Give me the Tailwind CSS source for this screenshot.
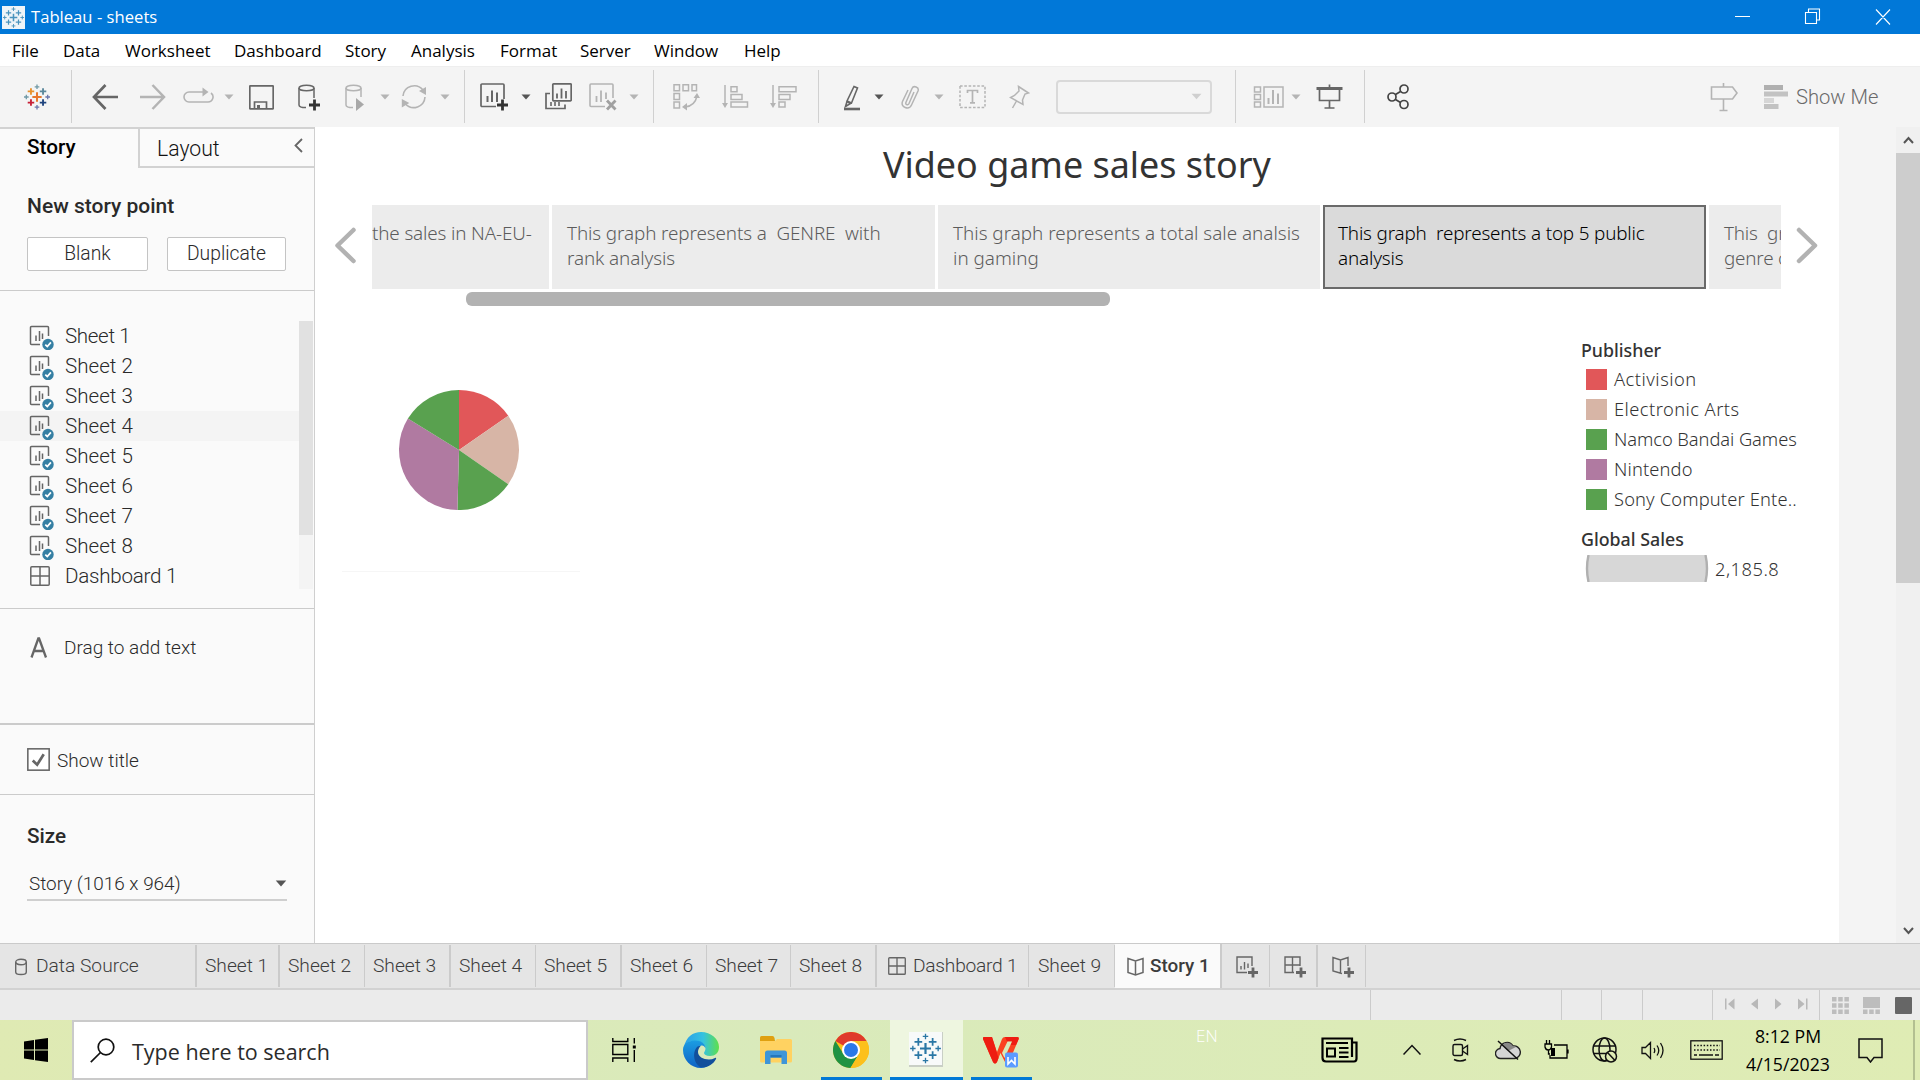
<!DOCTYPE html>
<html lang="en">
<head>
<meta charset="utf-8">
<title>Tableau - sheets</title>
<script src="https://cdn.jsdelivr.net/npm/@tailwindcss/browser@4"></script>
</head>
<body class="w-[1920px] h-[1080px] overflow-hidden bg-white flex flex-col font-['Open_Sans',sans-serif]">

<svg class="hidden">
  <symbol id="caret" viewBox="0 0 10 6"><path d="M.5 .5h9L5 5.5z" fill="currentColor"/></symbol>
  <symbol id="sheet" viewBox="0 0 25 25"><path d="M11 19.500H2.500a1 1 0 0 1-1-1V2.500a1 1 0 0 1 1-1H18.500a1 1 0 0 1 1 1V11" fill="none" stroke="#666" stroke-width="1.500"/><path d="M7 10.500v5.500M10.500 6v10M13.500 8.500V14" stroke="#666" stroke-width="1.500"/><circle cx="19" cy="19.500" r="5.700" fill="#357fa3"/><path d="M16.300 19.600l2 2 3.600-4.200" fill="none" stroke="#fff" stroke-width="1.700"/></symbol>
  <symbol id="board" viewBox="0 0 20 20"><rect x=".8" y=".8" width="18.400" height="18.400" rx="1" fill="none" stroke="#666" stroke-width="1.500"/><path d="M10 1v18M1 10h18" stroke="#666" stroke-width="1.500"/></symbol>
  <symbol id="marks" viewBox="0 0 28 28"><path d="M14 9v10M9 14h10" stroke-width="2"/><path d="M7.500 4.500v7M4 8h7M20.500 4.500v7M17 8h7M7.500 16.500v7M4 20h7M20.500 16.500v7M17 20h7" stroke-width="1.600"/><path d="M14 .5v5M11.500 3h5M14 22.500v5M11.500 25h5M2.500 11.500v5M0 14h5M25.500 11.500v5M23 14h5" stroke-width="1.200"/></symbol>
</svg>

<!-- Title bar -->
<header class="h-[34px] shrink-0 bg-[#0178d8] text-white flex items-center text-[16.6px]">
  <svg class="ml-[2px] w-[23px] h-[23px] bg-[#eef4f8]" viewBox="-1 -1 30 30"><use href="#marks" width="28" height="28" stroke="#4a93bd"/></svg>
  <span class="ml-[6px] pt-px tracking-[0.02px]">Tableau - sheets</span>
  <svg class="ml-auto mr-[28px] w-[158px] h-[18px]" viewBox="0 0 158 18" fill="none" stroke="#fff" stroke-width="1.100"><path d="M1 8.500h15M71.500 4.500h11v11h-11zM74.500 4v-3h11v11h-3M142 1.500l14 15M156 1.500l-14 15"/></svg>
</header>

<!-- Menu bar -->
<nav class="h-[32px] shrink-0 bg-white text-black text-[17px] flex items-center pt-px pl-[12px] gap-[25px]">
  <span class="w-[26px]">File</span><span class="w-[37px]">Data</span><span class="w-[84px]">Worksheet</span><span class="w-[86px]">Dashboard</span><span class="w-[41px]">Story</span><span class="w-[64px]">Analysis</span><span class="w-[55px]">Format</span><span class="w-[49px]">Server</span><span class="w-[65px]">Window</span><span>Help</span>
</nav>

<!-- Toolbar -->
<div class="h-[61px] shrink-0 bg-[#f4f4f4] border-t border-[#eeeeee] flex items-center pb-px text-[#b4b4b4]">
  <svg class="ml-[24px] w-[26px] h-[26px] shrink-0" viewBox="0 0 28 28"><path d="M14 9v10M9 14h10" stroke="#e8762c" stroke-width="2.200"/><path d="M7.500 4.500v7M4 8h7" stroke="#e8912c" stroke-width="2"/><path d="M20.500 4.500v7M17 8h7" stroke="#5b879b" stroke-width="2"/><path d="M7.500 16.500v7M4 20h7" stroke="#c72037" stroke-width="2"/><path d="M20.500 16.500v7M17 20h7" stroke="#1f447e" stroke-width="2"/><path d="M14 .5v5M11.500 3h5M2.500 11.500v5M0 14h5" stroke="#7099a6" stroke-width="1.400"/><path d="M14 22.500v5M11.500 25h5M25.500 11.500v5M23 14h5" stroke="#6a76ac" stroke-width="1.400"/></svg>
  <i class="ml-[21px] w-px h-[53px] bg-[#d0d0d0]"></i>
  <svg class="ml-[20px] w-[27px] h-[29px] shrink-0" viewBox="0 0 27 29" fill="none" stroke="#666" stroke-width="2.700"><path d="M26 15H2M13.500 3L2 15l11.500 12"/></svg>
  <svg class="ml-[21px] w-[27px] h-[29px] shrink-0" viewBox="0 0 27 29" fill="none" stroke="#b4b4b4" stroke-width="2.500"><path d="M0 15h24M12.500 3L24 15 12.500 27"/></svg>
  <svg class="ml-[16px] w-[31px] h-[29px] shrink-0" viewBox="0 0 31 29" fill="none" stroke="#b4b4b4" stroke-width="1.600"><path d="M22 10H6a5 5 0 0 0 0 10h19a5 5 0 0 0 3-9"/><path d="M19.500 5.500l6 4.500-6 4.500z" fill="#b4b4b4" stroke="none"/></svg>
  <svg class="ml-[10px] w-[10px] h-[6px] shrink-0"><use href="#caret"/></svg>
  <svg class="ml-[15px] w-[25px] h-[29px] shrink-0" viewBox="0 0 25 29" fill="none" stroke="#666" stroke-width="1.700"><rect x=".8" y="3.800" width="23.400" height="23" rx=".5"/><path d="M5.500 27v-7h12v7" /><path d="M9.500 23v4" stroke-width="3"/></svg>
  <svg class="ml-[24px] w-[23px] h-[29px] shrink-0" viewBox="0 0 23 29" fill="none" stroke="#666" stroke-width="1.500"><ellipse cx="8.500" cy="6" rx="7.500" ry="2.800"/><path d="M1 6v17c0 1.500 3 2.600 7 2.600M16 6v10"/><path d="M16.500 17.500v11M11 23h11" stroke="#333" stroke-width="2.800"/></svg>
  <svg class="ml-[24px] w-[20px] h-[29px] shrink-0" viewBox="0 0 20 29" fill="none" stroke="#b4b4b4" stroke-width="1.500"><ellipse cx="8.500" cy="6" rx="7.500" ry="2.800"/><path d="M1 6v17c0 1.500 3 2.600 7 2.600M16 6v9"/><path d="M11 16l8 6.500-8 6.500z" fill="#a8a8a8" stroke="none"/></svg>
  <svg class="ml-[15px] w-[10px] h-[6px] shrink-0"><use href="#caret"/></svg>
  <svg class="ml-[11px] w-[27px] h-[29px] shrink-0" viewBox="0 0 27 29" fill="none" stroke="#b4b4b4" stroke-width="1.600"><path d="M2 14A11.300 11.300 0 0 1 22 8M24 15A11.300 11.300 0 0 1 4.500 22"/><path d="M25 5v8l-7-4zM.8 25.500V17l7.500 4z" fill="#b4b4b4" stroke="none"/></svg>
  <svg class="ml-[12px] w-[10px] h-[6px] shrink-0"><use href="#caret"/></svg>
  <i class="ml-[14px] w-px h-[53px] bg-[#d0d0d0]"></i>
  <svg class="ml-[15px] w-[30px] h-[29px] shrink-0" viewBox="0 0 30 29" fill="none" stroke="#666" stroke-width="1.700"><path d="M16 24.500H2a1 1 0 0 1-1-1V3a1 1 0 0 1 1-1h21a1 1 0 0 1 1 1v14"/><path d="M7.500 14v6M12 8.500V20M17 10.500V20" stroke-width="2"/><path d="M22.500 17.500v11M17 23h11" stroke="#333" stroke-width="2.800"/></svg>
  <svg class="ml-[11px] w-[10px] h-[6px] shrink-0 text-[#555]"><use href="#caret"/></svg>
  <svg class="ml-[14px] w-[27px] h-[29px] shrink-0" viewBox="0 0 27 29" fill="none" stroke="#666" stroke-width="1.700"><rect x="7.800" y="1.800" width="18.400" height="17" rx=".8"/><path d="M12 11.500v5M16.500 6.500v10M21 9v7.500" stroke-width="1.800"/><path d="M5 11.500H1v15h19v-4"/><path d="M6 20v4M10 20v4M14 20v4" stroke-width="1.600"/></svg>
  <svg class="ml-[17px] w-[29px] h-[29px] shrink-0" viewBox="0 0 29 29" fill="none" stroke="#b4b4b4" stroke-width="1.600"><path d="M16 24.500H2a1 1 0 0 1-1-1V3a1 1 0 0 1 1-1h21a1 1 0 0 1 1 1v13"/><path d="M7.500 14v6M12 8.500V20M17 10.500V17" stroke-width="1.800"/><path d="M18 18.500l8.500 9M26.500 18.500l-8.500 9" stroke="#a0a0a0" stroke-width="2.800"/></svg>
  <svg class="ml-[11px] w-[10px] h-[6px] shrink-0"><use href="#caret"/></svg>
  <i class="ml-[14px] w-px h-[53px] bg-[#d0d0d0]"></i>
  <svg class="ml-[19px] w-[27px] h-[29px] shrink-0" viewBox="0 0 27 29" fill="none" stroke="#b4b4b4" stroke-width="1.500"><path d="M1 2.800h5.500v6H1zM10 2.800h5.500v6H10zM19 2.800h4.500v6H19zM1 11.500h5.500v6H1zM1 20h5.500v6H1zM12 25q10-1 12-11"/><path d="M20.500 16l3.500-5 3 5zM14 21l-5 4 5 3.500z" fill="#b4b4b4" stroke="none"/></svg>
  <svg class="ml-[22px] w-[27px] h-[29px] shrink-0" viewBox="0 0 27 29" fill="none" stroke="#b4b4b4" stroke-width="1.500"><path d="M3 3v21M9 4.800h6v5H9zM9 12.500h11v5H9zM9 20h16.500v5H9z"/><path d="M0 21h6l-3 5z" fill="#b4b4b4" stroke="none"/></svg>
  <svg class="ml-[21px] w-[27px] h-[29px] shrink-0" viewBox="0 0 27 29" fill="none" stroke="#b4b4b4" stroke-width="1.500"><path d="M3 3v21M9 4.800h17v5H9zM9 12.500h11v5H9zM9 20h6v5H9z"/><path d="M0 21h6l-3 5z" fill="#b4b4b4" stroke="none"/></svg>
  <i class="ml-[21px] w-px h-[53px] bg-[#d0d0d0]"></i>
  <svg class="ml-[24px] w-[18px] h-[29px] shrink-0" viewBox="0 0 18 29" fill="none" stroke="#666" stroke-width="1.600"><path d="M11 4.500l3.500 1.500-6 15-4.500-2zM4 19.500l3.500 2-5 3z"/><path d="M1 27h16" stroke-width="2.600"/></svg>
  <svg class="ml-[13px] w-[10px] h-[6px] shrink-0 text-[#555]"><use href="#caret"/></svg>
  <svg class="ml-[16px] w-[20px] h-[29px] shrink-0" viewBox="0 0 20 29" fill="none" stroke="#b4b4b4" stroke-width="1.500"><path d="M14 10L9 21.500c-1.200 2.500-4 1-3-1.300L12 6.500c1.500-3.500 7.500-1.500 6 2.500L11.500 23C9 28.500 .2 25.500 2.500 19.500L8 8"/></svg>
  <svg class="ml-[14px] w-[10px] h-[6px] shrink-0"><use href="#caret"/></svg>
  <svg class="ml-[15px] w-[27px] h-[29px] shrink-0" viewBox="0 0 27 29" fill="none" stroke="#b4b4b4" stroke-width="1.500"><rect x="1" y="4" width="25" height="21.500" stroke-dasharray="2.600 1.700"/><path d="M8.500 11V8.500h10V11M13.500 8.500v12M11 20.800h5" stroke-width="1.700"/></svg>
  <svg class="ml-[23px] w-[21px] h-[29px] shrink-0" viewBox="0 0 21 29" fill="none" stroke="#b4b4b4" stroke-width="1.500"><path d="M9.500 4.500l10 6.500-3.500 1-2.500 6 .5 4.500L1.500 15.500l4-2 4.500-4.500zM7.500 19L3.500 26"/></svg>
  <span class="ml-[26px] w-[156px] h-[34px] border-2 border-[#d9d9d9] rounded-sm flex items-center justify-end pr-[8px] text-[#cfcfcf]"><svg class="w-[11px] h-[7px]"><use href="#caret"/></svg></span>
  <i class="ml-[23px] w-px h-[53px] bg-[#d0d0d0]"></i>
  <svg class="ml-[17px] w-[31px] h-[29px] shrink-0" viewBox="0 0 31 29" fill="none" stroke="#b4b4b4" stroke-width="1.500"><path d="M1.500 5h6v5h-6zM1.500 12.500h6v5h-6zM1.500 20h6v5h-6zM11 5h19v20H11z"/><path d="M15.500 16v6M20 8v14M25 11.500V22" stroke-width="2"/></svg>
  <svg class="ml-[7px] w-[10px] h-[6px] shrink-0"><use href="#caret"/></svg>
  <svg class="ml-[15px] w-[27px] h-[29px] shrink-0" viewBox="0 0 27 29" fill="none" stroke="#666" stroke-width="1.700"><path d="M3.500 6v12.500h20V6M13.500 2.500V6M13.500 18.500V26M8.500 26h10"/><path d="M.5 6.500h26" stroke-width="3"/></svg>
  <i class="ml-[21px] w-px h-[53px] bg-[#d0d0d0]"></i>
  <svg class="ml-[22px] w-[22px] h-[29px] shrink-0" viewBox="0 0 22 29" fill="none" stroke="#444" stroke-width="1.700"><circle cx="5" cy="15" r="4"/><circle cx="17" cy="7" r="4"/><circle cx="17" cy="22.500" r="4"/><path d="M8.500 12.500l5-3M8.500 17.500l5 3"/></svg>
  <svg class="ml-[301px] w-[28px] h-[32px] shrink-0" viewBox="0 0 28 32" fill="none" stroke="#b4b4b4" stroke-width="1.600"><path d="M1.500 6h21l4.500 6-4.500 6h-21zM13.500 2v4M13.500 18v11.500M9.500 29.500h8"/></svg>
  <svg class="ml-[26px] w-[24px] h-[29px] shrink-0" viewBox="0 0 24 29"><path d="M0 3h19v5H0z" fill="#b0b0b0"/><path d="M0 9.500h24v5H0zM0 22h14.500v5H0z" fill="#c2c2c2"/><path d="M0 16h10v5H0z" fill="#d6d6d6"/></svg>
  <span class="ml-[8px] pt-px text-[20.200px] font-light text-[#6a6a6a] font-['Roboto',sans-serif] whitespace-nowrap">Show Me</span>
</div>

<div class="h-[816px] shrink-0 flex">
  <!-- Story side pane -->
  <aside class="w-[315px] shrink-0 bg-[#fafafa] border-r border-[#cfcfcf] flex flex-col font-['Roboto',sans-serif] text-[#2a2a2a] font-light">
    <div class="h-[41px] shrink-0 flex border-t-2 border-[#d2d2d2]">
      <div class="w-[138px] pl-[27px] leading-[37px] text-[20.700px] font-medium text-black">Story</div>
      <div class="grow border-l-2 border-b-2 border-[#d2d2d2] pl-[17px] pr-[11px] flex items-start justify-between text-[21.200px] leading-[39px] text-[#111]">Layout
        <svg class="mt-[9px] w-[9px] h-[15px]" viewBox="0 0 9 15" fill="none" stroke="#666" stroke-width="1.800"><path d="M8 1L1.500 7.500 8 14"/></svg>
      </div>
    </div>
    <div class="h-[123px] shrink-0 border-b border-[#cbcbcb] pl-[27px] pt-[24px]">
      <h2 class="text-[21px] leading-[28px] font-medium">New story point</h2>
      <div class="flex mt-[17px] gap-[19px] text-[19.300px] leading-[31px] text-center">
        <div class="w-[121px] h-[34px] bg-white border border-[#c4c4c4] rounded-[2px]">Blank</div>
        <div class="w-[119px] h-[34px] bg-white border border-[#c4c4c4] rounded-[2px]">Duplicate</div>
      </div>
    </div>
    <div class="h-[318px] shrink-0 border-b border-[#cbcbcb] pt-[30px] flex">
      <ul class="w-[299px] text-[20.600px] leading-[30px]">
        <li class="flex h-[30px] pl-[29px] gap-[11px] tracking-[-0.35px]"><svg class="mt-[4px] w-[25px] h-[25px]"><use href="#sheet"/></svg>Sheet 1</li>
        <li class="flex h-[30px] pl-[29px] gap-[11px]"><svg class="mt-[4px] w-[25px] h-[25px]"><use href="#sheet"/></svg>Sheet 2</li>
        <li class="flex h-[30px] pl-[29px] gap-[11px]"><svg class="mt-[4px] w-[25px] h-[25px]"><use href="#sheet"/></svg>Sheet 3</li>
        <li class="flex h-[30px] pl-[29px] gap-[11px] bg-[#f4f4f4]"><svg class="mt-[4px] w-[25px] h-[25px]"><use href="#sheet"/></svg>Sheet 4</li>
        <li class="flex h-[30px] pl-[29px] gap-[11px]"><svg class="mt-[4px] w-[25px] h-[25px]"><use href="#sheet"/></svg>Sheet 5</li>
        <li class="flex h-[30px] pl-[29px] gap-[11px]"><svg class="mt-[4px] w-[25px] h-[25px]"><use href="#sheet"/></svg>Sheet 6</li>
        <li class="flex h-[30px] pl-[29px] gap-[11px]"><svg class="mt-[4px] w-[25px] h-[25px]"><use href="#sheet"/></svg>Sheet 7</li>
        <li class="flex h-[30px] pl-[29px] gap-[11px]"><svg class="mt-[4px] w-[25px] h-[25px]"><use href="#sheet"/></svg>Sheet 8</li>
        <li class="flex h-[30px] pl-[29px] gap-[15px] tracking-[-0.25px]"><svg class="mt-[5px] ml-px w-[20px] h-[20px]"><use href="#board"/></svg>Dashboard 1</li>
      </ul>
      <div class="w-[14px] h-[268px] bg-[#f4f4f4]"><div class="h-[214px] bg-[#e1e1e1]"></div></div>
    </div>
    <div class="h-[116px] shrink-0 border-b-2 border-[#cbcbcb] pl-[30px] pt-[24px] flex gap-[16px] text-[19px] leading-[30px]">
      <svg class="mt-[4px] w-[18px] h-[21px]" viewBox="0 0 18 21" fill="none" stroke="#666" stroke-width="2.300"><path d="M1.500 20.500L8.300 1.500h.8L16 20.500M4 14h9.500"/></svg>
      <span>Drag to add text</span>
    </div>
    <div class="h-[70px] shrink-0 border-b border-[#cbcbcb] pl-[27px] flex items-center gap-[8px] text-[19px]">
      <svg class="w-[23px] h-[23px] mb-px" viewBox="0 0 22 22" fill="#fff" stroke="#666"><rect x=".8" y=".8" width="20.400" height="20.400" stroke-width="1.500"/><path d="M5.500 12l4.200 4L16 6" fill="none" stroke-width="2.600"/></svg>
      <span class="pt-[4px] -ml-px">Show title</span>
    </div>
    <div class="pl-[27px] pt-[27px]">
      <h2 class="text-[20.700px] leading-[28px] font-medium">Size</h2>
      <div class="mt-[20px] w-[260px] h-[31px] border-b-2 border-[#cfcfcf] flex items-center justify-between pb-[2px] pl-[2px] text-[18.900px] leading-[27px]">Story (1016 x 964)
        <svg class="w-[12px] h-[7px] text-[#555]"><use href="#caret"/></svg>
      </div>
    </div>
  </aside>

  <!-- Story canvas -->
  <main class="w-[1524px] shrink-0 bg-white font-['Noto_Sans',sans-serif] text-[#333]">
    <h1 class="ml-[568px] pt-[13px] h-[78px] text-[35.900px] leading-[50px] whitespace-nowrap">Video game sales story</h1>
    <div class="flex h-[84px]">
      <svg class="ml-[18px] mt-[21px] w-[24px] h-[40px]" viewBox="0 0 24 40" fill="none" stroke="#b2b2b2" stroke-width="4.500" stroke-linecap="round" stroke-linejoin="round"><path d="M20.500 4L4.500 19.500 20.500 35"/></svg>
      <div class="ml-[15px] w-[1409px] flex gap-[3px] overflow-hidden text-[18.850px] leading-[25px] font-light text-[#5c5c5c] whitespace-pre">
        <div class="w-[177px] shrink-0 bg-[#ececec] pt-[16px] tracking-[-0.14px]">the sales in NA-EU-</div>
        <div class="w-[383px] shrink-0 bg-[#ececec] pt-[16px] pl-[15px] tracking-[-0.1px]">This graph represents a  GENRE  with
rank analysis</div>
        <div class="w-[382px] shrink-0 bg-[#ececec] pt-[16px] pl-[15px]">This graph represents a total sale analsis
in gaming</div>
        <div class="w-[383px] shrink-0 bg-[#dadada] border-2 border-[#6a6a6a] pt-[14px] pl-[13px] text-black tracking-[-0.17px]">This graph  represents a top 5 public
analysis</div>
        <div class="w-[383px] shrink-0 bg-[#ececec] pt-[16px] pl-[15px] tracking-[-0.2px]">This  graph
genre of</div>
      </div>
      <svg class="ml-[14px] mt-[21px] w-[24px] h-[40px]" viewBox="0 0 24 40" fill="none" stroke="#b2b2b2" stroke-width="4.500" stroke-linecap="round" stroke-linejoin="round"><path d="M4 4l16 15.500L4 35"/></svg>
    </div>
    <div class="mt-[3px] ml-[151px] w-[644px] h-[14px] rounded-[6px] bg-[#b2b2b2]"></div>
    <div class="flex justify-between">
      <div class="ml-[27px] w-[238px] h-[266px] border-b border-[#f6f6f6] pt-[84px] pl-[57px]">
        <svg class="w-[120px] h-[120px]" viewBox="-60 -60 120 120">
          <path d="M0 0V-60A60 60 0 0 1 49.300-34.200z" fill="#e15759"/>
          <path d="M0 0L49.300-34.200A60 60 0 0 1 49.300 34.200z" fill="#d7b5a6"/>
          <path d="M0 0L49.300 34.200A60 60 0 0 1-1.600 60z" fill="#59a14f"/>
          <path d="M0 0L-1.600 60A60 60 0 0 1-51.100-31.400z" fill="#b07aa1"/>
          <path d="M0 0L-51.100-31.400A60 60 0 0 1 0-60z" fill="#59a14f"/>
        </svg>
      </div>
      <div class="w-[258px] pt-[30px] text-[18.300px] font-light leading-[30px]">
        <h3 class="text-[17.800px] font-medium leading-[28px]">Publisher</h3>
        <ul class="pl-[5px]">
          <li class="flex items-center gap-[7px] h-[30px] tracking-[0.5px]"><i class="w-[21px] h-[21px] bg-[#e15759]"></i>Activision</li>
          <li class="flex items-center gap-[7px] h-[30px] tracking-[0.45px]"><i class="w-[21px] h-[21px] bg-[#d7b5a6]"></i>Electronic Arts</li>
          <li class="flex items-center gap-[7px] h-[30px] tracking-[-0.06px]"><i class="w-[21px] h-[21px] bg-[#59a14f]"></i>Namco Bandai Games</li>
          <li class="flex items-center gap-[7px] h-[30px] tracking-[0.15px]"><i class="w-[21px] h-[21px] bg-[#b07aa1]"></i>Nintendo</li>
          <li class="flex items-center gap-[7px] h-[30px] tracking-[0.15px]"><i class="w-[21px] h-[21px] bg-[#59a14f]"></i>Sony Computer Ente..</li>
        </ul>
        <h3 class="mt-[11px] text-[17.800px] font-medium leading-[28px]">Global Sales</h3>
        <div class="flex items-center pl-[4px] gap-[6px]">
          <svg class="w-[124px] h-[27px]" viewBox="0 0 124 27"><path d="M3 0h118q2 13.500 0 27H3q-2-13.500 0-27z" fill="#d7d7d7"/><path d="M3.500 0Q.5 13.500 3.500 27M120.500 0q3 13.500 0 27" fill="none" stroke="#b0b0b0" stroke-width="2.400"/></svg>
          <span class="tracking-[0.5px] pt-px">2,185.8</span>
        </div>
      </div>
    </div>
  </main>
  <div class="w-[57px] bg-[#f4f4f4]"></div>
  <div class="w-[24px] bg-[#f0f0f0] flex flex-col items-center">
    <svg class="mt-[9px] mb-[9px] w-[11px] h-[8px] shrink-0" viewBox="0 0 11 8" fill="none" stroke="#555" stroke-width="2"><path d="M1 7l4.500-5L10 7"/></svg>
    <div class="w-[24px] h-[430px] bg-[#cdcdcd]"></div>
    <svg class="mt-auto mb-[8px] w-[11px] h-[8px] shrink-0" viewBox="0 0 11 8" fill="none" stroke="#555" stroke-width="2"><path d="M1 1l4.500 5L10 1"/></svg>
  </div>
</div>

<!-- Sheet tabs -->
<div class="h-[47px] shrink-0 bg-[#e5e5e5] border-t border-b-2 border-t-[#cacaca] border-b-[#d2d2d2] flex items-center text-[19.200px] font-light text-[#3c3c3c] font-['Roboto',sans-serif] whitespace-nowrap">
  <div class="w-[197px] h-[42px] border-r-2 border-[#cbcbcb] flex items-center pt-px pl-[15px] gap-[9px]"><svg class="w-[12px] h-[18px]" viewBox="0 0 12 17" fill="none" stroke="#666" stroke-width="1.400"><ellipse cx="6" cy="3.500" rx="5.300" ry="2.700"/><path d="M.7 3.500v10c0 3.400 10.600 3.400 10.600 0v-10"/></svg>Data Source</div>
  <div class="w-[83px] h-[42px] border-r-2 border-[#cbcbcb] flex items-center pt-px pl-[8px]">Sheet 1</div>
  <div class="w-[85px] h-[42px] border-r border-[#cbcbcb] flex items-center pt-px pl-[8px]">Sheet 2</div>
  <div class="w-[86px] h-[42px] border-r-2 border-[#cbcbcb] flex items-center pt-px pl-[8px]">Sheet 3</div>
  <div class="w-[85px] h-[42px] border-r border-[#cbcbcb] flex items-center pt-px pl-[8px]">Sheet 4</div>
  <div class="w-[86px] h-[42px] border-r-2 border-[#cbcbcb] flex items-center pt-px pl-[8px]">Sheet 5</div>
  <div class="w-[85px] h-[42px] border-r border-[#cbcbcb] flex items-center pt-px pl-[8px]">Sheet 6</div>
  <div class="w-[84px] h-[42px] border-r border-[#cbcbcb] flex items-center pt-px pl-[8px]">Sheet 7</div>
  <div class="w-[86px] h-[42px] border-r-2 border-[#cbcbcb] flex items-center pt-px pl-[8px]">Sheet 8</div>
  <div class="w-[152px] h-[42px] border-r border-[#cbcbcb] flex items-center pt-px pl-[11px] gap-[7px] tracking-[-0.25px]"><svg class="w-[18px] h-[18px] mb-px"><use href="#board" width="18" height="18"/></svg>Dashboard 1</div>
  <div class="w-[86px] h-[42px] border-r border-[#cbcbcb] flex items-center pt-px pl-[9px]">Sheet 9</div>
  <div class="w-[107px] h-[44px] bg-[#fafafa] border-r-2 border-[#cbcbcb] flex items-center pl-[12px] gap-[6px] font-medium text-[18.900px]"><svg class="w-[17px] h-[19px] mt-px" viewBox="0 0 17 19" fill="none" stroke="#666" stroke-width="1.500"><path d="M1 1.500l7.500 2.500L16 1.500v14L8.500 18 1 15.500zM8.500 4v14"/></svg>Story 1</div>
  <div class="w-[48px] h-[42px] border-r border-[#cbcbcb] flex items-center pt-px pl-[14px]"><svg class="w-[22px] h-[22px]" viewBox="0 0 22 22" fill="none" stroke="#666" stroke-width="1.400"><path d="M11 16.500H1V1h15v9M5 10v3.500M8.500 6v7.500M12 7.500V12"/><path d="M17 11.500v10M12 16.500h10" stroke-width="2.800"/></svg></div>
  <div class="w-[48px] h-[42px] border-r-2 border-[#cbcbcb] flex items-center pt-px pl-[14px]"><svg class="w-[22px] h-[22px]" viewBox="0 0 22 22" fill="none" stroke="#666" stroke-width="1.400"><path d="M10 16.500H1V1h15v9M8.500 1v15M1 9h15"/><path d="M17 11.500v10M12 16.500h10" stroke-width="2.800"/></svg></div>
  <div class="w-[48px] h-[42px] border-r border-[#cbcbcb] flex items-center pt-px pl-[14px]"><svg class="w-[22px] h-[22px]" viewBox="0 0 22 22" fill="none" stroke="#666" stroke-width="1.400"><path d="M10 17.500l-2-.5-7-2V1.500L8.500 4 16 1.500V10M8.500 4v13"/><path d="M17 11.500v10M12 16.500h10" stroke-width="2.800"/></svg></div>
</div>

<!-- Status bar -->
<div class="h-[30px] shrink-0 bg-[#ebebeb] flex items-center text-[#bdbdbd]">
  <i class="ml-[1370px] w-px h-full bg-[#cbcbcb]"></i>
  <i class="ml-[190px] w-px h-full bg-[#cbcbcb]"></i>
  <i class="ml-[39px] w-px h-full bg-[#cbcbcb]"></i>
  <i class="ml-[40px] w-px h-full bg-[#cbcbcb]"></i>
  <i class="ml-[69px] w-px h-full bg-[#cbcbcb]"></i>
  <svg class="ml-[12px] w-[84px] h-[12px] mb-[2px]" viewBox="0 0 84 12" fill="#b8b8b8"><path d="M0 .5h1.500v11H0zM9.500.5v11L3 6zM33 .5v11L26 6zM50 .5v11L56.500 6zM73 .5v11L79.500 6zM81 .5h1.500v11H81z"/></svg>
  <i class="ml-[10px] w-px h-full bg-[#cbcbcb]"></i>
  <svg class="ml-[12px] w-[17px] h-[17px]" viewBox="0 0 17 17" fill="#bdbdbd"><path d="M0 0h4.500v4.500H0zM6.200 0h4.500v4.500H6.200zM12.400 0h4.500v4.500h-4.500zM0 6.200h4.500v4.500H0zM6.200 6.200h4.500v4.500H6.200zM12.400 6.200h4.500v4.500h-4.500zM0 12.400h4.500v4.500H0zM6.200 12.400h4.500v4.500H6.200zM12.400 12.400h4.500v4.500h-4.500z"/></svg>
  <svg class="ml-[14px] w-[17px] h-[17px]" viewBox="0 0 17 17" fill="#bdbdbd"><path d="M0 0h17v11H0zM0 12.400h4.500v4.500H0zM6.200 12.400h4.500v4.500H6.200zM12.400 12.400h4.500v4.500h-4.500z"/></svg>
  <i class="ml-[15px] w-[17px] h-[17px] bg-[#666] rounded-[1px]"></i>
</div>

<!-- Windows taskbar -->
<footer class="h-[60px] shrink-0 bg-linear-to-r from-[#dfeab3] via-[#d9eabb] via-40% to-[#dfecb4] flex items-center text-black">
  <svg class="ml-[24px] w-[24px] h-[24px]" viewBox="0 0 24 24"><path d="M0 3.500L10 2v9.500H0zM11 1.800L24 0v11.500H11zM0 12.500h10V22L0 20.500zM11 12.500h13V24l-13-1.800z"/></svg>
  <div class="ml-[24px] w-[516px] h-[60px] bg-white border-2 border-[#cacaca] flex items-center">
    <svg class="ml-[16px] w-[25px] h-[25px]" viewBox="0 0 25 25" fill="none" stroke="#111" stroke-width="1.700"><circle cx="16" cy="9" r="7.800"/><path d="M10.500 14.500L.8 24.200"/></svg>
    <span class="ml-[17px] pt-[4px] text-[21.500px] text-[#2b2b2b]">Type here to search</span>
  </div>
  <svg class="ml-[24px] w-[25px] h-[24px]" viewBox="0 0 25 24" fill="none" stroke="#000" stroke-width="1.400"><path d="M.8 0v3.500h15V0M.8 6.500h15v10h-15zM.8 24v-4h15v4M22.300 0v5.500M22.300 12v12"/><path d="M20.800 7.500h3v3h-3z" fill="#000" stroke="none"/></svg>
  <!-- Edge -->
  <svg class="ml-[46px] w-[36px] h-[36px]" viewBox="0 0 36 36">
    <defs><linearGradient id="e1" x1="0" x2="1"><stop offset="0" stop-color="#2a9fe8"/><stop offset=".55" stop-color="#35c2e0"/><stop offset="1" stop-color="#5fe04a"/></linearGradient><linearGradient id="e2" x1="0" y1="0" x2="0" y2="1"><stop offset="0" stop-color="#1b9de2"/><stop offset="1" stop-color="#0f62c4"/></linearGradient></defs>
    <path d="M1 15C3 5 10 0 18 0c10 0 18 7 18 15 0 6-4 9-9 9-4 0-6-1.500-6-3 0-1 1.500-2 1.500-4.500C22.500 12 18 9 12 9 7 9 3 11 1 15z" fill="url(#e1)"/>
    <path d="M0 18C0 12 5 8.500 12 8.500c6.500 0 10.500 3.500 10.500 8-1-2.500-3-3.500-5-2.500-4 2-5 9-1 14 3 4 7 5 11 4-3 2.500-6 4-9.500 4C8 36 0 28 0 18z" fill="url(#e2)"/>
    <path d="M14 15c-4.500 5-4 15 3 20 6 1.500 13-2 16-8 .5-1-.3-1.500-1-1-2 1-4 1.500-6 1.500-6 0-11-3-11-7.500 0-2 .8-4 2.500-6-1.500 0-2.500 0-3.500 1z" fill="#124f9c"/>
  </svg>
  <!-- File Explorer -->
  <svg class="ml-[41px] w-[32px] h-[28px]" viewBox="0 0 32 28"><path d="M0 1.500Q0 0 1.500 0h11Q14 0 14.500 2l.5 3H0z" fill="#dfa010"/><path d="M0 5h15l2-2h13.500Q32 3 32 4.500V25q0 1.500-1.500 1.500h-29Q0 26.500 0 25z" fill="#ffd261"/><path d="M5 17q0-2.500 2.500-2.500h17Q27 14.500 27 17v11h-5.500v-6.500h-11V28H5z" fill="#3f95d8"/><path d="M10.500 21.500h11V19h-11z" fill="#2376bd"/></svg>
  <!-- Chrome -->
  <div class="ml-[29px] w-[61px] h-full border-b-3 border-[#0179d6] pt-[12px] pl-[12px]">
    <svg class="w-[36px] h-[36px]" viewBox="0 0 36 36"><circle cx="18" cy="18" r="18" fill="#fcc01c"/><path d="M18 18L2.400 9A18 18 0 0 1 33.600 9z" fill="#df3a2c"/><path d="M2.400 9A18 18 0 0 0 17.500 36L25.500 22.500 18 18l-7.500 4z" fill="#1f9243"/><path d="M18 9h15.600A18 18 0 0 1 17.500 36l8.300-13.500z" fill="#fcc01c"/><circle cx="18" cy="18" r="9" fill="#fff"/><circle cx="18" cy="18" r="7" fill="#2b78e8"/></svg>
  </div>
  <!-- Tableau -->
  <div class="ml-[8px] w-[73px] h-full bg-white/55 border-b-3 border-[#0179d6] pt-[12px] pl-[19px]">
    <svg class="w-[34px] h-[35px] bg-[#f8fafa] border-b-2 border-r border-[#c9cfc6]" viewBox="-1 -1 30 30"><use href="#marks" width="28" height="28" stroke="#2a77a5"/></svg>
  </div>
  <!-- WPS -->
  <div class="ml-[8px] w-[61px] h-full border-b-3 border-[#0179d6] pt-[17px] pl-[12px]">
    <svg class="w-[37px] h-[32px]" viewBox="0 0 37 32">
      <path d="M1 0h8l5 15L19 2q.8-2 3-2h12q2.500 0 1.500 2.500L26 25q-1.500 3-4 0l-4.500-9L14 25q-2 3-4 0L0 2Q-.3 0 1 0z" fill="#fb4220"/>
      <path d="M1 0h8l6.500 21L14 25q-2 3-4 0L0 2Q-.3 0 1 0z" fill="#ee1c12"/>
      <path d="M22 0h12q2.500 0 1.500 2.500L33 8h-6L29 4.500h-5z" fill="#ee1c12"/>
      <path d="M24.500 4.500h4.500L21.500 21l-2.500-5z" fill="#d9ebba"/>
      <rect x="22" y="15.500" width="13" height="15" rx="2" fill="#5b9bff"/><path d="M25 20v7l3.500-3.500L32 27v-7" fill="none" stroke="#fff" stroke-width="1.600"/></svg>
  </div>
  <span class="ml-[164px] w-[23px] text-[17px] font-light text-white pb-[29px]">EN</span>
  <svg class="ml-[102px] w-[37px] h-[26px]" viewBox="0 0 37 26" fill="none" stroke="#000" stroke-width="2.200"><path d="M31 4.500V1.500H1.500V21q0 3.500 3.500 3.500h28q2.500 0 2.500-3V5.500H31V20"/><path d="M5 6h22M18 11h9.500M18 15.500h9.500M18 20h9.500M6 11.500h8v8H6z" stroke-width="2"/></svg>
  <svg class="ml-[45px] w-[18px] h-[11px] mb-px" viewBox="0 0 18 11" fill="none" stroke="#111" stroke-width="1.500"><path d="M.5 10.500L9 1.500l8.500 9"/></svg>
  <svg class="ml-[31px] w-[17px] h-[24px]" viewBox="0 0 17 24" fill="none" stroke="#111" stroke-width="1.400"><rect x="1" y="6.500" width="9.500" height="11" rx="1.500"/><path d="M10.500 11l5-3.500v9l-5-3.500M2 2.500q6-3 12 0M2 21.500q6 3 12 0"/></svg>
  <svg class="ml-[26px] w-[26px] h-[20px]" viewBox="0 0 26 20"><path d="M6 18.500a5 5 0 0 1-1-10A7 7 0 0 1 18 6a6 6 0 0 1 2 12.500z" fill="#d5d5d5" stroke="#222" stroke-width="1.400"/><path d="M7 5a7 7 0 0 1 11 1l3 1-8 4z" fill="#888"/><path d="M3 1l20 18.500" stroke="#111" stroke-width="1.500"/></svg>
  <svg class="ml-[23px] w-[25px] h-[20px]" viewBox="0 0 25 20" fill="none" stroke="#000" stroke-width="1.300"><path d="M10 5h13v13H6v-3M24 9.500v4"/><path d="M2.500 0v4M5.500 0v4M1 4h6.500v3q-.8 3-3.300 3T1 7zM4.500 10v4H6"/><path d="M7 8h4v8H7z" fill="#000" stroke="none"/></svg>
  <svg class="ml-[23px] w-[26px] h-[26px]" viewBox="0 0 26 26" fill="none" stroke="#111" stroke-width="1.500"><circle cx="12.500" cy="12.500" r="11.500"/><ellipse cx="12.500" cy="12.500" rx="5.500" ry="11.500"/><path d="M1.500 9h22M1.500 16.500h13"/><circle cx="19" cy="19.500" r="5.500" fill="#dfecb4"/><path d="M15.500 15.500l7.500 8"/></svg>
  <svg class="ml-[23px] w-[24px] h-[19px]" viewBox="0 0 24 19" fill="none" stroke="#111" stroke-width="1.300"><path d="M1 6.500h3.500l5-5v16l-5-5H1zM13 7q1.500 2.500 0 5M16 4.500q3.500 5 0 10M19.500 2q5 7.500 0 15"/></svg>
  <svg class="ml-[25px] w-[33px] h-[20px]" viewBox="0 0 33 20" fill="none" stroke="#111" stroke-width="1.300"><rect x=".8" y=".8" width="31.400" height="18.400"/><path d="M4 5.500h26M4 10h26" stroke-dasharray="1.500 1.700"/><path d="M4 15h3M9 15h14M25 15h4"/></svg>
  <div class="ml-[15px] w-[100px] text-[17.700px] leading-[28px] text-center">8:12 PM<br>4/15/2023</div>
  <svg class="ml-[20px] w-[25px] h-[25px]" viewBox="0 0 25 25" fill="none" stroke="#111" stroke-width="1.500"><path d="M1 1h23v18.500H16L12.500 24 9 19.500H1z"/></svg>
  <i class="ml-auto mr-[5px] w-[2px] h-full bg-[#b3bf91]"></i>
</footer>
</body>
</html>
